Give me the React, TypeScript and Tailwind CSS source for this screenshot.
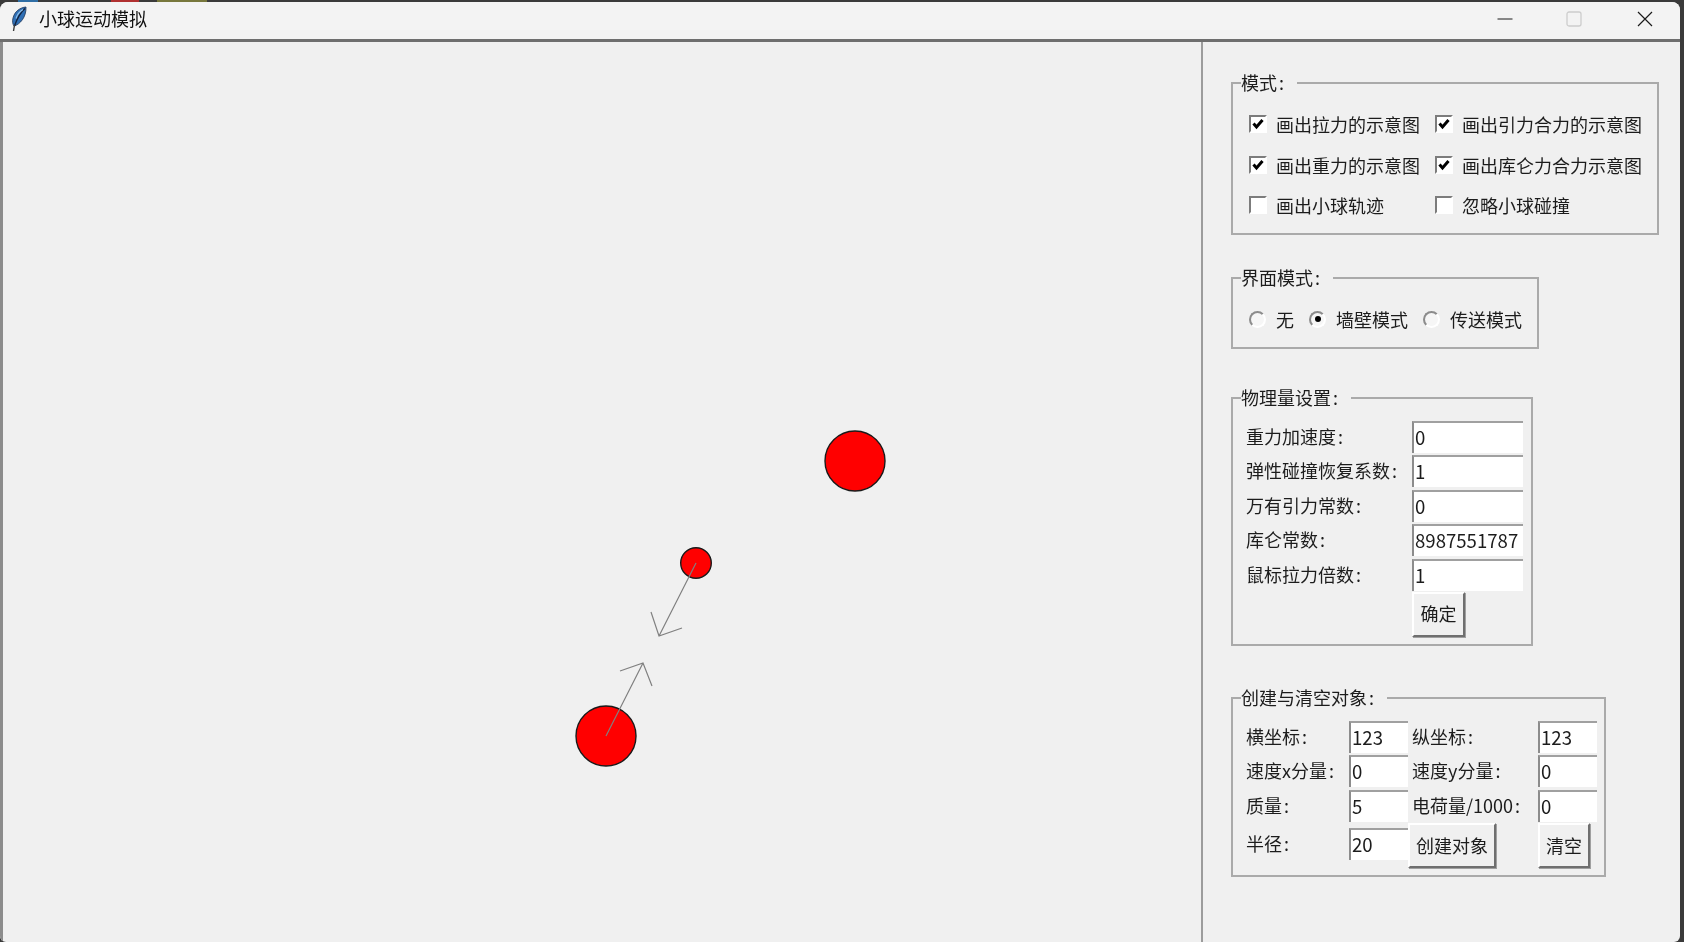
import React from "react";

const font = "font-['Noto_Sans_CJK_SC','Noto_Sans',sans-serif]";

function FeatherIcon(): React.JSX.Element {
  return (
    <svg width="18" height="26" viewBox="0 0 18 26" className="block">
      <path d="M16 1 C10 1.5 4.5 5.5 3 12 C2.2 15 2.5 18 4 20 C10 18.5 16.5 11 16 1 Z" fill="#2f6fb5" stroke="#1d3557" strokeWidth="0.8" />
      <path d="M15 2.5 C11 6 7.5 11 4.5 20" stroke="#12233f" strokeWidth="1.5" fill="none" />
      <path d="M4.5 19 L3.5 25" stroke="#3a3a3a" strokeWidth="1.4" />
      <path d="M13 3.5 C9.5 5.5 7 9 6 12.5" stroke="#8fc0ea" strokeWidth="1.1" fill="none" />
    </svg>
  );
}

function WindowButtons(): React.JSX.Element {
  return (
    <div className="flex items-center">
      <svg width="16" height="16" viewBox="0 0 16 16" className="mr-[53px] block">
        <path d="M0.5 8 H15.5" stroke="#1a1a1a" strokeWidth="1" />
      </svg>
      <svg width="16" height="16" viewBox="0 0 16 16" className="mr-[55px] block">
        <rect x="1" y="1" width="14" height="14" rx="2" fill="none" stroke="#cdcdcd" strokeWidth="1.3" />
      </svg>
      <svg width="16" height="16" viewBox="0 0 16 16" className="block">
        <path d="M1 1 L15 15 M15 1 L1 15" stroke="#1a1a1a" strokeWidth="1.2" />
      </svg>
    </div>
  );
}

function Check({ label, on }: { label: string; on?: boolean }): React.JSX.Element {
  return (
    <div className="flex h-6 items-center">
      <span className="flex h-[18px] w-[18px] items-center justify-center border-2 border-t-[#7c7c7c] border-r-white border-b-white border-l-[#7c7c7c] bg-white">
        {on && (
          <svg width="12" height="12" viewBox="0 0 12 12" className="block">
            <path d="M1.5 5.5 L4.5 9 L10.5 2" stroke="#000" strokeWidth="3" fill="none" />
          </svg>
        )}
      </span>
      <span className="ml-[9px]">{label}</span>
    </div>
  );
}

function Radio({ label, on, className }: { label: string; on?: boolean; className?: string }): React.JSX.Element {
  return (
    <div className={`flex h-6 items-center ${className ?? ""}`}>
      <span className="flex h-[17px] w-[17px] items-center justify-center rounded-full border-2 border-t-[#8c8c8c] border-r-white border-b-white border-l-[#8c8c8c] bg-[#f6f6f6]">
        {on && <span className="h-[6px] w-[6px] rounded-full bg-black" />}
      </span>
      <span className="ml-[10px]">{label}</span>
    </div>
  );
}

function Entry({ value, className }: { value: string; className?: string }): React.JSX.Element {
  return (
    <div className={`flex h-[32px] items-center overflow-hidden border-t-2 border-l-2 border-t-[#a0a0a0] border-l-[#8c8c8c] bg-white pb-[2px] pl-[1px] text-[18.6px] ${className ?? ""}`}>
      {value}
    </div>
  );
}

function TkButton({ label, className }: { label: string; className?: string }): React.JSX.Element {
  return (
    <div className={`-mt-[1px] flex h-[45px] items-center justify-center border-2 border-t-white border-r-[#6f6f6f] border-b-[#6f6f6f] border-l-white bg-[#f0f0f0] pb-[2px] shadow-[1px_1px_0_#a0a0a0] ${className ?? ""}`}>
      {label}
    </div>
  );
}

// the colon sits a little further from the text than the font sets it
function Label({ text, className }: { text: string; className?: string }): React.JSX.Element {
  return (
    <div className={`flex items-center pb-[2px] ${className ?? ""}`}>
      {text}
      <span className="ml-[2px]">:</span>
    </div>
  );
}

function Group({ title, className, children }: { title: string; className?: string; children: React.ReactNode }): React.JSX.Element {
  return (
    <fieldset className={`ml-0 border-2 border-[#aaaaaa] ${className ?? ""}`}>
      <legend className="ml-[8px] flex h-6 pr-[13px] leading-[22px]">
        {title}
        <span className="ml-[2px]">:</span>
      </legend>
      {children}
    </fieldset>
  );
}

export default function App(): React.JSX.Element {
  return (
    <div className={`flex h-[942px] w-[1684px] flex-col overflow-hidden bg-[#3a3a3a] text-[18px] leading-6 text-[#1c1c1c] blur-[0.35px] ${font}`}>
      {/* strip of the desktop above the window */}
      <div className="flex h-[2px] shrink-0">
        <div className="ml-[18px] w-[20px] bg-[#2f6ea5]" />
        <div className="ml-[73px] w-[28px] bg-[#b03030]" />
        <div className="ml-[18px] w-[50px] bg-[#77773c]" />
      </div>

      <div className="mr-[4px] flex min-h-0 flex-1 flex-col overflow-hidden rounded-t-[8px] rounded-b-[6px] bg-[#f0f0f0]">
        {/* Title bar */}
        <div className="flex h-[40px] shrink-0 items-center justify-between border-b-[3px] border-[#6e6e6e] bg-[#f3f3f3] pr-[27px] pb-[3px] pl-[10px]">
          <div className="flex items-center">
            <FeatherIcon />
            <span className="mb-[2px] ml-[11px] text-[#111]">小球运动模拟</span>
          </div>
          <WindowButtons />
        </div>

        <div className="flex min-h-0 flex-1">
          {/* Canvas */}
          <div className="w-[1201px] shrink-0 border-l-[3px] border-[#8c8c8c]">
            <svg width="1198" height="900" viewBox="3 42 1198 900" className="block">
              <circle cx="855" cy="461" r="30" fill="#ff0000" stroke="#1a1a1a" strokeWidth="1.4" />
              <circle cx="696" cy="563" r="15.3" fill="#ff0000" stroke="#1a1a1a" strokeWidth="1.4" />
              <circle cx="606" cy="736" r="30" fill="#ff0000" stroke="#1a1a1a" strokeWidth="1.4" />
              <path d="M696 563 L659 636 M651 612 L659 636 L682 628" stroke="#808080" strokeWidth="1.2" fill="none" />
              <path d="M606 736 L643 663 M620 671 L643 663 L652 686" stroke="#808080" strokeWidth="1.2" fill="none" />
            </svg>
          </div>

          {/* Controls */}
          <div className="flex-1 border-l-2 border-[#9c9c9c] pt-[29px] pl-[28px]">
            <Group title="模式" className="h-[164px] w-[428px]">
              <div className="grid grid-cols-[186px_auto] gap-y-[16.5px] pt-[17px] pl-[16px]">
                <Check label="画出拉力的示意图" on />
                <Check label="画出引力合力的示意图" on />
                <Check label="画出重力的示意图" on />
                <Check label="画出库仑力合力示意图" on />
                <Check label="画出小球轨迹" />
                <Check label="忽略小球碰撞" />
              </div>
            </Group>

            <Group title="界面模式" className="mt-[31px] h-[83px] w-[308px]">
              <div className="flex pt-[17px] pl-[16px]">
                <Radio label="无" />
                <Radio label="墙壁模式" on className="ml-[15px]" />
                <Radio label="传送模式" className="ml-[15px]" />
              </div>
            </Group>

            <Group title="物理量设置" className="mt-[37px] h-[260px] w-[302px]">
              <div className="grid grid-cols-[166px_111px] gap-y-[2.4px] pt-[11px] pl-[13px]">
                <Label text="重力加速度" />
                <Entry value="0" />
                <Label text="弹性碰撞恢复系数" />
                <Entry value="1" />
                <Label text="万有引力常数" />
                <Entry value="0" />
                <Label text="库仑常数" />
                <Entry value="8987551787" />
                <Label text="鼠标拉力倍数" />
                <Entry value="1" />
                <div />
                <TkButton label="确定" className="w-[53px]" />
              </div>
            </Group>

            <Group title="创建与清空对象" className="mt-[40px] h-[191px] w-[375px]">
              <div className="grid grid-cols-[103px_59px_130px_auto] items-center gap-y-[2.4px] pt-[11px] pl-[13px]">
                <Label text="横坐标" />
                <Entry value="123" />
                <Label text="纵坐标" className="pl-[4px]" />
                <Entry value="123" className="w-[59px]" />
                <Label text="速度x分量" />
                <Entry value="0" />
                <Label text="速度y分量" className="pl-[4px]" />
                <Entry value="0" className="w-[59px]" />
                <Label text="质量" />
                <Entry value="5" />
                <Label text="电荷量/1000" className="pl-[4px]" />
                <Entry value="0" className="w-[59px]" />
                <Label text="半径" className="mb-[4px]" />
                <Entry value="20" className="mb-[4px]" />
                <TkButton label="创建对象" className="w-[88px]" />
                <TkButton label="清空" className="w-[52px]" />
              </div>
            </Group>
          </div>
        </div>
      </div>
    </div>
  );
}
